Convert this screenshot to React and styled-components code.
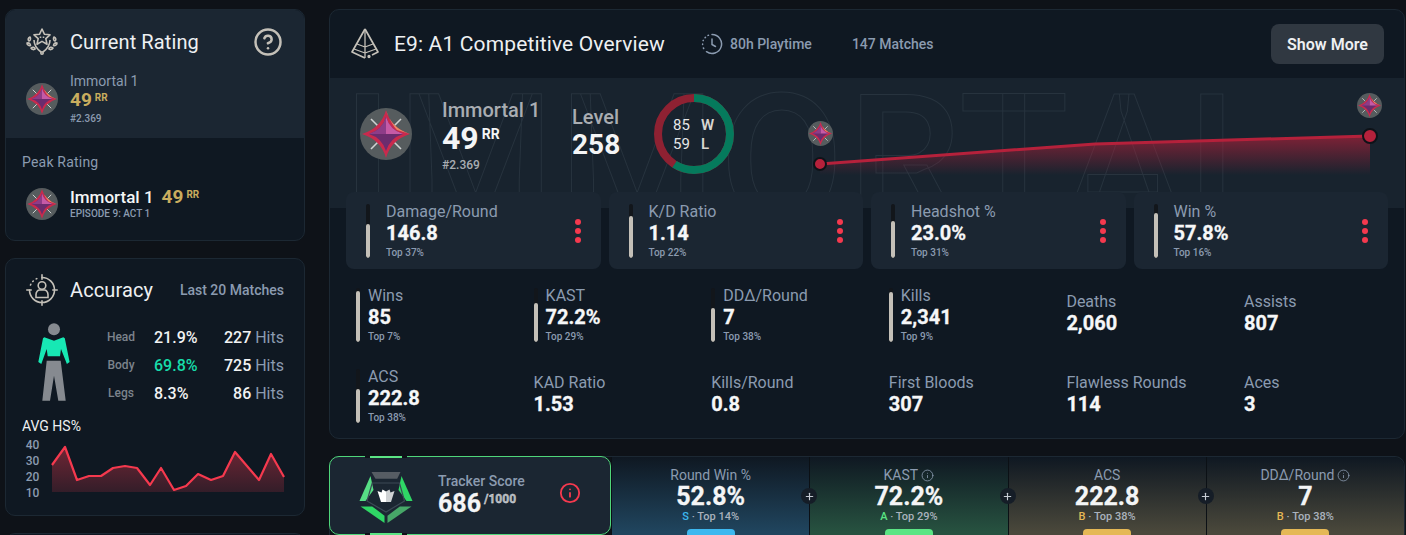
import React from 'react';
import styled, { createGlobalStyle } from 'styled-components';
import { CircleHelp, Info, Plus } from 'lucide-react';

const GlobalStyle = createGlobalStyle`
  html, body {
    margin: 0;
    height: 535px;
    overflow: hidden;
    background: #0e1218;
    font-family: Roboto, 'Liberation Sans', sans-serif;
    color: #fff;
  }
`;

const Page = styled.div`
  display: flex;
  gap: 24px;
  height: 535px;
  padding: 9px 0 0 5px;
  box-sizing: border-box;
  overflow: hidden;
`;

const LeftColumn = styled.div`
  display: flex;
  flex-direction: column;
  gap: 17px;
  width: 300px;
  flex-shrink: 0;
`;

const Card = styled.section`
  background: #0f1822;
  border: 1px solid #1c2833;
  border-radius: 10px;
  box-sizing: border-box;
  overflow: hidden;
  flex-shrink: 0;
`;

const RatingCard = styled(Card)`
  height: 232px;
`;

const BlankCard = styled(Card)`
  height: 40px;
`;

const RatingTop = styled.div`
  background: #1b2632;
  height: 128px;
  padding: 16px 20px 0;
  box-sizing: border-box;
`;

const CardHeading = styled.div`
  display: flex;
  align-items: center;
  gap: 12px;
  height: 32px;
`;

const CardTitle = styled.h2`
  margin: 0;
  font-size: 20px;
  line-height: 24px;
  font-weight: 400;
  color: #eef0f2;
  letter-spacing: 0.1px;
  flex: 1;
`;

const HelpSlot = styled.span`
  display: flex;
  color: #c4c0b8;
  margin-right: 1px;
`;

const RankRow = styled.div`
  display: flex;
  align-items: center;
  gap: 12px;
  margin-top: ${p => p.$top || 0}px;
  padding-left: ${p => p.$left || 0}px;
`;

const RankName = styled.div`
  font-size: 14px;
  line-height: 16px;
  color: #8b9bb0;
`;

const RR = styled.div`
  font-size: 19px;
  line-height: 21px;
  font-weight: 700;
  color: #c9ad5e;
`;

const Sup = styled.sup`
  font-size: ${p => p.$size || 10}px;
  font-weight: 700;
  margin-left: 3px;
  line-height: 0;
  vertical-align: ${p => p.$lift || 5}px;
  color: ${p => p.$color || 'inherit'};
`;

const RankNo = styled.div`
  font-size: 10px;
  line-height: 13px;
  font-weight: 500;
  color: #8b9bb0;
  margin-top: 2px;
`;

const RatingBottom = styled.div`
  padding: 15px 16px 0 16px;
  height: 102px;
  box-sizing: border-box;
`;

const PeakLabel = styled.div`
  font-size: 14px;
  line-height: 18px;
  color: #8b9bb0;
  letter-spacing: 0.2px;
`;

const PeakName = styled.div`
  font-size: 17px;
  line-height: 20px;
  font-weight: 500;
  color: #f4f5f6;
  display: flex;
  align-items: baseline;
  gap: 8px;
`;

const PeakRR = styled.span`
  font-size: 19px;
  color: #c9ad5e;
  font-weight: 700;
`;

const PeakSub = styled.div`
  font-size: 10px;
  line-height: 13px;
  font-weight: 500;
  color: #8b9bb0;
`;

const AccuracyCard = styled(Card)`
  height: 258px;
  padding: 15px 20px 0 16px;
`;

const AccuracyHeading = styled(CardHeading)`
  padding-left: 4px;
`;

const MutedSmall = styled.span`
  font-size: 14px;
  font-weight: 500;
  color: #8b9bb0;
`;

const BodyBlock = styled.div`
  display: flex;
  margin-top: 17px;
`;

const FigureSlot = styled.div`
  width: 66px;
  padding-left: 16px;
  box-sizing: border-box;
  flex-shrink: 0;
`;

const HitTable = styled.div`
  display: grid;
  grid-template-columns: 66px 62px 1fr;
  grid-auto-rows: 28px;
  flex: 1;
  align-items: center;
`;

const HitZone = styled.span`
  font-size: 12px;
  font-weight: 500;
  color: #7c838c;
  text-align: center;
`;

const HitPct = styled.span`
  font-size: 16px;
  font-weight: 500;
  color: ${p => p.$hot ? '#17dcaa' : '#f2f3f4'};
`;

const HitCount = styled.span`
  font-size: 16px;
  font-weight: 500;
  color: #f2f3f4;
  text-align: right;
`;

const HitWord = styled.span`
  font-weight: 400;
  color: #8b9bb0;
`;

const AvgLabel = styled.div`
  font-size: 14px;
  line-height: 16px;
  font-weight: 400;
  color: #eef0f2;
  margin-top: 11px;
`;

const ChartRow = styled.div`
  display: flex;
  gap: 9px;
  margin-top: 3px;
`;

const AxisLabels = styled.div`
  display: flex;
  flex-direction: column;
  font-size: 12px;
  line-height: 16px;
  font-weight: 500;
  color: #8b9bb0;
  width: 23px;
  text-align: center;
`;

const HsSvg = styled.svg`
  margin-top: 8px;
  overflow: visible;
`;

const MainColumn = styled.div`
  display: flex;
  flex-direction: column;
  gap: 17px;
  width: 1076px;
  flex-shrink: 0;
`;

const OverviewCard = styled(Card)`
  height: 430px;
`;

const OverviewHeader = styled.header`
  height: 68px;
  display: flex;
  align-items: center;
  padding: 0 20px 0 21px;
  box-sizing: border-box;
`;

const OverviewTitle = styled.h1`
  margin: 0 0 0 15px;
  font-size: 21px;
  font-weight: 400;
  color: #eef0f2;
  white-space: nowrap;
  letter-spacing: 0.14px;
`;

const HeaderMeta = styled.span`
  display: flex;
  align-items: center;
  gap: 7px;
  font-size: 14px;
  font-weight: 500;
  color: #8b9bb0;
  margin-left: ${p => p.$left}px;
`;

const ShowMore = styled.button`
  margin-left: auto;
  width: 113px;
  height: 40px;
  border: 0;
  border-radius: 8px;
  background: #303841;
  color: #eef0f2;
  font-family: inherit;
  font-size: 16px;
  font-weight: 600;
`;

const Hero = styled.div`
  position: relative;
  height: 130px;
  background: #18232e;
  display: flex;
  align-items: flex-start;
  padding: 30px 0 0 30px;
  box-sizing: border-box;
  overflow: hidden;
`;

const GhostWord = styled.div`
  position: absolute;
  left: 12px;
  top: -7px;
  font-size: 180px;
  line-height: 180px;
  font-weight: 500;
  letter-spacing: 4px;
  white-space: nowrap;
  color: transparent;
  -webkit-text-stroke: 1px #27333e;
`;

const HeroItem = styled.div`
  position: relative;
  flex-shrink: 0;
  width: ${p => p.$width}px;
  margin-top: ${p => p.$top || 0}px;
`;

const HeroRankName = styled.div`
  font-size: 20px;
  line-height: 24px;
  font-weight: 500;
  color: #a9adb2;
`;

const HeroValue = styled.div`
  font-size: ${p => p.$size || 28}px;
  line-height: 32px;
  font-weight: 700;
  color: #f4f5f6;
`;

const HeroSub = styled.div`
  font-size: 12px;
  line-height: 16px;
  font-weight: 500;
  color: #a9adb2;
  margin-top: 3px;
`;

const Donut = styled.div`
  display: grid;
  width: 80px;
  height: 80px;
  margin: -14px 71px 0 0;
  position: relative;
  flex-shrink: 0;
  & > * { grid-area: 1 / 1; }
`;

const DonutText = styled.div`
  display: grid;
  grid-template-columns: 24px 14px;
  column-gap: 4px;
  align-content: center;
  justify-content: center;
  font-size: 15px;
  line-height: 19px;
  color: #e6e7e8;
  padding-top: 1px;
`;

const DonutLetter = styled.span`
  font-weight: 600;
  color: #d8d6d0;
`;

const HeroChart = styled.svg`
  position: relative;
  flex-shrink: 0;
  margin-top: -30px;
`;

const TopStats = styled.div`
  position: relative;
  display: grid;
  grid-template-columns: repeat(4, 1fr);
  gap: 8px;
  margin-top: -16px;
  padding: 0 16px;
`;

const StatCard = styled.div`
  height: 77px;
  background: #1b2632;
  border-radius: 8px;
  display: flex;
  align-items: center;
  padding: 1px 20px 0;
  box-sizing: border-box;
`;

const Meter = styled.div`
  width: 4px;
  height: 54px;
  background: #12161b;
  border-radius: 2px;
  margin-right: ${p => p.$gap}px;
  overflow: hidden;
  display: flex;
  flex-direction: column;
  justify-content: flex-end;
  flex-shrink: 0;
`;

const MeterFill = styled.div`
  background: #c4c0b8;
  border-radius: 2px;
`;

const StatBody = styled.div`
  flex: 1;
  min-width: 0;
`;

const StatLabel = styled.div`
  font-size: 16px;
  line-height: 18px;
  color: #8b9bb0;
  white-space: nowrap;
`;

const StatValue = styled.div`
  font-size: 20px;
  line-height: 25px;
  font-weight: 700;
  color: #f6f7f8;
  -webkit-text-stroke: 0.3px #f6f7f8;
`;

const StatTop = styled.div`
  font-size: 10px;
  line-height: 12px;
  font-weight: 500;
  color: #8b9bb0;
  margin-top: 1px;
`;

const Dots = styled.div`
  display: flex;
  flex-direction: column;
  gap: 3px;
`;

const Dot = styled.i`
  width: 6px;
  height: 6px;
  border-radius: 50%;
  background: #f5394e;
`;

const StatGrid = styled.div`
  display: grid;
  grid-template-columns: repeat(5, 177.6px) 1fr;
  grid-auto-rows: 55px;
  row-gap: 26px;
  margin-top: 18px;
  padding-left: 26px;
`;

const GridStat = styled.div`
  display: flex;
  align-items: center;
`;

const ScoreRow = styled.section`
  display: flex;
  height: 79px;
  border: 1px solid #1c2833;
  border-bottom: 0;
  border-radius: 10px 10px 0 0;
  box-sizing: border-box;
  flex-shrink: 0;
`;

const ScoreCard = styled.div`
  position: relative;
  width: 282px;
  margin: -1px 0 0 -1px;
  background: #1b2632;
  border: 1px solid #4fd67a;
  border-radius: 10px;
  box-sizing: border-box;
  display: flex;
  align-items: flex-start;
  padding: 15px 0 0 29px;
  flex-shrink: 0;

  &::before, &::after {
    content: '';
    position: absolute;
    left: 40px;
    width: 32px;
    height: 2px;
    background: #5be584;
    box-shadow: -5px 0 0 #0e1218, 5px 0 0 #0e1218;
  }
  &::before { top: -1px; }
  &::after { bottom: -1px; }
`;

const ScoreText = styled.div`
  margin-left: 25px;
  width: 121px;
`;

const ScoreLabel = styled.div`
  font-size: 14px;
  line-height: 18px;
  font-weight: 500;
  color: #8b9bb0;
`;

const ScoreValue = styled.div`
  font-size: 25px;
  line-height: 27px;
  font-weight: 700;
  color: #f4f5f6;
  -webkit-text-stroke: 0.3px #f4f5f6;
`;

const ScoreInfo = styled.span`
  display: flex;
  color: #f5394e;
  margin-top: 10px;
`;

const TierCell = styled.div`
  position: relative;
  flex: 1;
  border-left: 1px solid #0b1015;
  background: linear-gradient(180deg, #0f1822 0%, ${p => p.$tint} 75px);
  display: flex;
  flex-direction: column;
  align-items: center;
  padding-top: 9px;
  border-top-right-radius: ${p => p.$last ? 10 : 0}px;
`;

const TierTitle = styled.div`
  display: flex;
  align-items: center;
  gap: 3px;
  height: 20px;
  font-size: 14px;
  line-height: 18px;
  color: #8b9bb0;
`;

const TierValue = styled.div`
  font-size: 25px;
  line-height: 26px;
  font-weight: 700;
  color: #f4f5f6;
  -webkit-text-stroke: 0.3px #f4f5f6;
`;

const TierGrade = styled.div`
  font-size: 11px;
  line-height: 14px;
  font-weight: 500;
  color: #aab2bd;
`;

const GradeLetter = styled.span`
  color: ${p => p.$color};
`;

const TierBar = styled.div`
  width: 48px;
  height: 6px;
  margin-top: 5px;
  border-radius: 4px 4px 0 0;
  background: ${p => p.$color};
`;

const PlusBadge = styled.span`
  position: absolute;
  right: -8px;
  top: 31px;
  width: 16px;
  height: 16px;
  border-radius: 50%;
  background: #151d27;
  color: #c6ccd4;
  display: flex;
  align-items: center;
  justify-content: center;
  z-index: 1;
`;

const RankGlyph = ({ size = 32, x, y }) => (
  <svg width={size} height={size} x={x} y={y} viewBox="0 0 52 52" style={{ flexShrink: 0 }}>
    <circle cx="26" cy="26" r="26" fill="#565c5e" />
    <path d="M11 11l30 30M41 11L11 41" stroke="#cfd2d2" strokeWidth="1.6" />
    <path d="M26 2Q31 20 50 26Q31 32 26 50Q21 32 2 26Q21 20 26 2Z" fill="#c92a4d" />
    <path d="M26 2Q31 20 50 26L37 22Q31 16 26 2Z" fill="#ec8a63" />
    <path d="M26 9Q30 22 43 26Q30 30 26 43Q22 30 9 26Q22 22 26 9Z" fill="#6b2c6e" />
    <path d="M26 9Q30 22 43 26H26Z" fill="#c65aa6" />
    <path d="M26 9Q22 22 9 26H26Z" fill="#8e3c88" />
  </svg>
);

const LaurelIcon = () => (
  <svg width="32" height="28" viewBox="0 0 32 28" fill="none" stroke="#c4c0b8" strokeWidth="1.6" strokeLinejoin="round">
    <path d="M16 1l2.4 5.2 5.6.6-4.200 3.800 1.200 5.600L16 13.400l-5 2.800 1.200-5.600L8 6.800l5.600-.6z" />
    <path d="M14.500 8.500v1.500M17.500 8.500v1.500" />
    <path d="M4 9c-2 1-2.500 3-1 4 1.500-.5 2-2.500 1-4zM1 15c0 2 2 3 3.500 2.500C4.500 15.500 3 14.500 1 15zM5 20c1 1.800 3 2 4.200 1-.7-1.800-2.500-2.400-4.200-1z" />
    <path d="M28 9c2 1 2.500 3 1 4-1.500-.5-2-2.500-1-4zM31 15c0 2-2 3-3.500 2.500C27.500 15.500 29 14.500 31 15zM27 20c-1 1.800-3 2-4.200 1 .7-1.800 2.500-2.400 4.200-1z" />
    <path d="M8 12c0 5 3 9 7 12M24 12c0 5-3 9-7 12" />
    <circle cx="16" cy="25" r="1.200" />
  </svg>
);

const CrosshairPersonIcon = () => (
  <svg width="32" height="32" viewBox="0 0 32 32" fill="none" stroke="#c4c0b8" strokeWidth="1.600" strokeLinecap="round">
    <path d="M16 3.500A12.500 12.500 0 1 1 3.500 16" />
    <path d="M4.500 11l.3-.7M6.800 7.500l.5-.5M10.200 4.900l.6-.3" />
    <path d="M16 .8v4.400M16 26.800v4.400M.8 16h4.400M26.800 16h4.400" />
    <circle cx="16" cy="11.500" r="3.800" />
    <path d="M10 23.500v-3c0-2.800 2-4.500 3.500-4.500h5c1.500 0 3.500 1.700 3.500 4.500v3z" />
  </svg>
);

const PyramidIcon = () => (
  <svg width="28" height="32" viewBox="0 0 28 32" fill="none" stroke="#c4c0b8" strokeWidth="1.700" strokeLinejoin="round">
    <path d="M14 1L1 24l13 6" />
    <path d="M14 1l13 23-6 3" />
    <path d="M14 1v29M6 16l8 3 8-3M3 21l11 4 11-4" strokeWidth="1.300" />
    <circle cx="18" cy="28.500" r="0.800" />
  </svg>
);

const DashedClockIcon = () => (
  <svg width="22" height="22" viewBox="0 0 22 22" fill="none" stroke="#8b9bb0" strokeWidth="1.500" strokeLinecap="round">
    <path d="M11 1.500a9.500 9.500 0 1 1-5.500 17.200" />
    <path d="M1.600 11v.5M2.300 7.300l-.2.400M4.500 4.200l-.4.400M7.500 2.200l-.5.200M2.400 15l.3.500" />
    <path d="M11 6v5.500l3.500 2" />
  </svg>
);

const BodyFigure = () => (
  <svg width="32" height="78" viewBox="0 0 32 78">
    <circle cx="16" cy="6.300" r="6" fill="#868a90" />
    <path d="M6.300 14.300L16 17.700l9.300-3.400 1.500 1L31.600 39l-2.700 2L23 26l-1 7.300H9.700L8.700 26 3.300 41 .3 39 5 15.300z" fill="#17e8b4" />
    <path d="M8.700 37.700h14l5 40h-7.400L16 52.700l-4 25H4.300z" fill="#868a90" />
  </svg>
);

const hsPoints = [[0, 18], [13, 0], [25, 33], [37, 29], [49, 29], [61, 21], [73, 19], [85, 21], [98, 38], [109, 21], [122, 43], [134, 39], [146, 27], [159, 33], [171, 29], [183, 5], [195, 19], [207, 33], [219, 7], [232, 30]];

const HsChart = () => {
  const line = hsPoints.map(([x, y]) => `${x},${y + 2}`).join(' ');
  return (
    <HsSvg width="232" height="48" viewBox="0 0 232 48">
      <defs>
        <linearGradient id="hsFill" x1="0" x2="0" y1="0" y2="1">
          <stop offset="0" stopColor="#f5394e" stopOpacity="0.42" />
          <stop offset="1" stopColor="#f5394e" stopOpacity="0.16" />
        </linearGradient>
      </defs>
      <polygon points={`0,47 ${line} 232,47`} fill="url(#hsFill)" />
      <polyline points={line} fill="none" stroke="#f5394e" strokeWidth="2.200" strokeLinejoin="round" />
    </HsSvg>
  );
};

const TrackerBadge = () => (
  <svg width="54" height="52" viewBox="0 0 53 52" style={{ flexShrink: 0 }}>
    <polygon points="12,0 41,0 37.700,6.700 16,6.700" fill="#565c63" />
    <polygon points="11,4 14,18 6,29 0,29" fill="#57df85" />
    <polygon points="42,4 39,18 47,29 53,29" fill="#2fd765" />
    <polygon points="1,34.400 12.700,34.400 25,43.700 25,51" fill="#2fd765" />
    <polygon points="28,51 28,43.700 40.300,34.400 52,34.400" fill="#47a768" />
    <polygon points="12.700,11 40,11 45,29 26.500,40 7.500,29" fill="none" stroke="#3c4955" strokeWidth="1.200" />
    <path d="M18 19l4 1.500 1-3 3.500 2V30h-5z" fill="#fff" />
    <path d="M35 19l-4 1.500-1-3-3.500 2V30h5z" fill="#cfd2d4" />
  </svg>
);

const statCards = [
  { label: 'Damage/Round', value: '146.8', top: 37 },
  { label: 'K/D Ratio', value: '1.14', top: 22 },
  { label: 'Headshot %', value: '23.0%', top: 31 },
  { label: 'Win %', value: '57.8%', top: 16 },
];

const gridStats = [
  { label: 'Wins', value: '85', top: 7 },
  { label: 'KAST', value: '72.2%', top: 29 },
  { label: 'DDΔ/Round', value: '7', top: 38 },
  { label: 'Kills', value: '2,341', top: 9 },
  { label: 'Deaths', value: '2,060' },
  { label: 'Assists', value: '807' },
  { label: 'ACS', value: '222.8', top: 38 },
  { label: 'KAD Ratio', value: '1.53' },
  { label: 'Kills/Round', value: '0.8' },
  { label: 'First Bloods', value: '307' },
  { label: 'Flawless Rounds', value: '114' },
  { label: 'Aces', value: '3' },
];

const tiers = [
  { title: 'Round Win %', value: '52.8%', grade: 'S', top: 14, color: '#3db8ef', tint: '#20455e' },
  { title: 'KAST', value: '72.2%', grade: 'A', top: 29, color: '#5be584', tint: '#275240', info: true },
  { title: 'ACS', value: '222.8', grade: 'B', top: 38, color: '#e5b855', tint: '#4a483b' },
  { title: 'DDΔ/Round', value: '7', grade: 'B', top: 38, color: '#e5b855', tint: '#4a483b', info: true },
];

const hits = [
  { zone: 'Head', pct: '21.9%', count: 227 },
  { zone: 'Body', pct: '69.8%', count: 725, hot: true },
  { zone: 'Legs', pct: '8.3%', count: 86 },
];

const StatMeter = ({ top, gap }) => (
  <Meter $gap={gap}>
    <MeterFill style={{ height: `${100 - top}%` }} />
  </Meter>
);

export default function App() {
  return (
    <>
      <GlobalStyle />
      <Page>
        <LeftColumn>
          <RatingCard>
            <RatingTop>
              <CardHeading>
                <LaurelIcon />
                <CardTitle>Current Rating</CardTitle>
                <HelpSlot><CircleHelp size={30} strokeWidth={2} /></HelpSlot>
              </CardHeading>
              <RankRow $top={15}>
                <RankGlyph />
                <div>
                  <RankName>Immortal 1</RankName>
                  <RR>49<Sup>RR</Sup></RR>
                  <RankNo>#2.369</RankNo>
                </div>
              </RankRow>
            </RatingTop>
            <RatingBottom>
              <PeakLabel>Peak Rating</PeakLabel>
              <RankRow $top={16} $left={4}>
                <RankGlyph />
                <div>
                  <PeakName>Immortal 1 <PeakRR>49<Sup>RR</Sup></PeakRR></PeakName>
                  <PeakSub>EPISODE 9: ACT 1</PeakSub>
                </div>
              </RankRow>
            </RatingBottom>
          </RatingCard>

          <AccuracyCard>
            <AccuracyHeading>
              <CrosshairPersonIcon />
              <CardTitle>Accuracy</CardTitle>
              <MutedSmall>Last 20 Matches</MutedSmall>
            </AccuracyHeading>
            <BodyBlock>
              <FigureSlot><BodyFigure /></FigureSlot>
              <HitTable>
                {hits.map(h => (
                  <React.Fragment key={h.zone}>
                    <HitZone>{h.zone}</HitZone>
                    <HitPct $hot={h.hot}>{h.pct}</HitPct>
                    <HitCount>{h.count} <HitWord>Hits</HitWord></HitCount>
                  </React.Fragment>
                ))}
              </HitTable>
            </BodyBlock>
            <AvgLabel>AVG HS%</AvgLabel>
            <ChartRow>
              <AxisLabels>
                <span>40</span><span>30</span><span>20</span><span>10</span>
              </AxisLabels>
              <HsChart />
            </ChartRow>
          </AccuracyCard>

          <BlankCard />
        </LeftColumn>

        <MainColumn>
          <OverviewCard>
            <OverviewHeader>
              <PyramidIcon />
              <OverviewTitle>E9: A1 Competitive Overview</OverviewTitle>
              <HeaderMeta $left={36}><DashedClockIcon />80h Playtime</HeaderMeta>
              <HeaderMeta $left={40}>147 Matches</HeaderMeta>
              <ShowMore>Show More</ShowMore>
            </OverviewHeader>

            <Hero>
              <GhostWord>IMMORTAL</GhostWord>
              <HeroItem $width={82}><RankGlyph size={52} /></HeroItem>
              <HeroItem $width={130} $top={-10}>
                <HeroRankName>Immortal 1</HeroRankName>
                <HeroValue $size={32}>49<Sup $size={14} $lift={10}>RR</Sup></HeroValue>
                <HeroSub>#2.369</HeroSub>
              </HeroItem>
              <HeroItem $width={82} $top={-3}>
                <HeroRankName>Level</HeroRankName>
                <HeroValue>258</HeroValue>
              </HeroItem>
              <Donut>
                <svg width="80" height="80" viewBox="0 0 80 80">
                  <circle cx="40" cy="40" r="36" fill="none" stroke="#8e2132" strokeWidth="8" />
                  <circle cx="40" cy="40" r="36" fill="none" stroke="#057a5c" strokeWidth="8" strokeDasharray="133.500 226.200" transform="rotate(-90 40 40)" />
                </svg>
                <DonutText>
                  <span>85</span><DonutLetter>W</DonutLetter>
                  <span>59</span><DonutLetter>L</DonutLetter>
                </DonutText>
              </Donut>
              <HeroChart width="580" height="130" viewBox="0 0 580 130">
                <defs>
                  <linearGradient id="rrFill" gradientUnits="userSpaceOnUse" x1="0" x2="0" y1="58" y2="97">
                    <stop offset="0" stopColor="#b5213b" stopOpacity="0.65" />
                    <stop offset="1" stopColor="#b5213b" stopOpacity="0" />
                  </linearGradient>
                </defs>
                <polygon points="15,86 290,66 565,58 565,97 15,97" fill="url(#rrFill)" />
                <polyline points="15,86 290,66 565,58" fill="none" stroke="#b5213b" strokeWidth="3" />
                <circle cx="15" cy="86" r="6" fill="#b5213b" stroke="#0e1218" strokeWidth="2" />
                <circle cx="565" cy="58" r="7" fill="#b5213b" stroke="#0e1218" strokeWidth="2" />
                <RankGlyph size={25} x={3} y={43} />
                <RankGlyph size={25} x={552} y={15} />
              </HeroChart>
            </Hero>

            <TopStats>
              {statCards.map(s => (
                <StatCard key={s.label}>
                  <StatMeter top={s.top} gap={16} />
                  <StatBody>
                    <StatLabel>{s.label}</StatLabel>
                    <StatValue>{s.value}</StatValue>
                    <StatTop>Top {s.top}%</StatTop>
                  </StatBody>
                  <Dots><Dot /><Dot /><Dot /></Dots>
                </StatCard>
              ))}
            </TopStats>

            <StatGrid>
              {gridStats.map(s => (
                <GridStat key={s.label}>
                  {s.top !== undefined && <StatMeter top={s.top} gap={8} />}
                  <StatBody>
                    <StatLabel>{s.label}</StatLabel>
                    <StatValue>{s.value}</StatValue>
                    {s.top !== undefined && <StatTop>Top {s.top}%</StatTop>}
                  </StatBody>
                </GridStat>
              ))}
            </StatGrid>
          </OverviewCard>

          <ScoreRow>
            <ScoreCard>
              <TrackerBadge />
              <ScoreText>
                <ScoreLabel>Tracker Score</ScoreLabel>
                <ScoreValue>686<Sup $size={12} $lift={9} $color="#a9adb2">/1000</Sup></ScoreValue>
              </ScoreText>
              <ScoreInfo><Info size={22} strokeWidth={2} /></ScoreInfo>
            </ScoreCard>
            {tiers.map((t, i) => (
              <TierCell key={t.title} $tint={t.tint} $last={i === tiers.length - 1}>
                <TierTitle>{t.title}{t.info && <Info size={13} strokeWidth={1.5} />}</TierTitle>
                <TierValue>{t.value}</TierValue>
                <TierGrade><GradeLetter $color={t.color}>{t.grade}</GradeLetter> · Top {t.top}%</TierGrade>
                <TierBar $color={t.color} />
                {i < tiers.length - 1 && <PlusBadge><Plus size={11} strokeWidth={2.5} /></PlusBadge>}
              </TierCell>
            ))}
          </ScoreRow>
        </MainColumn>
      </Page>
    </>
  );
}
